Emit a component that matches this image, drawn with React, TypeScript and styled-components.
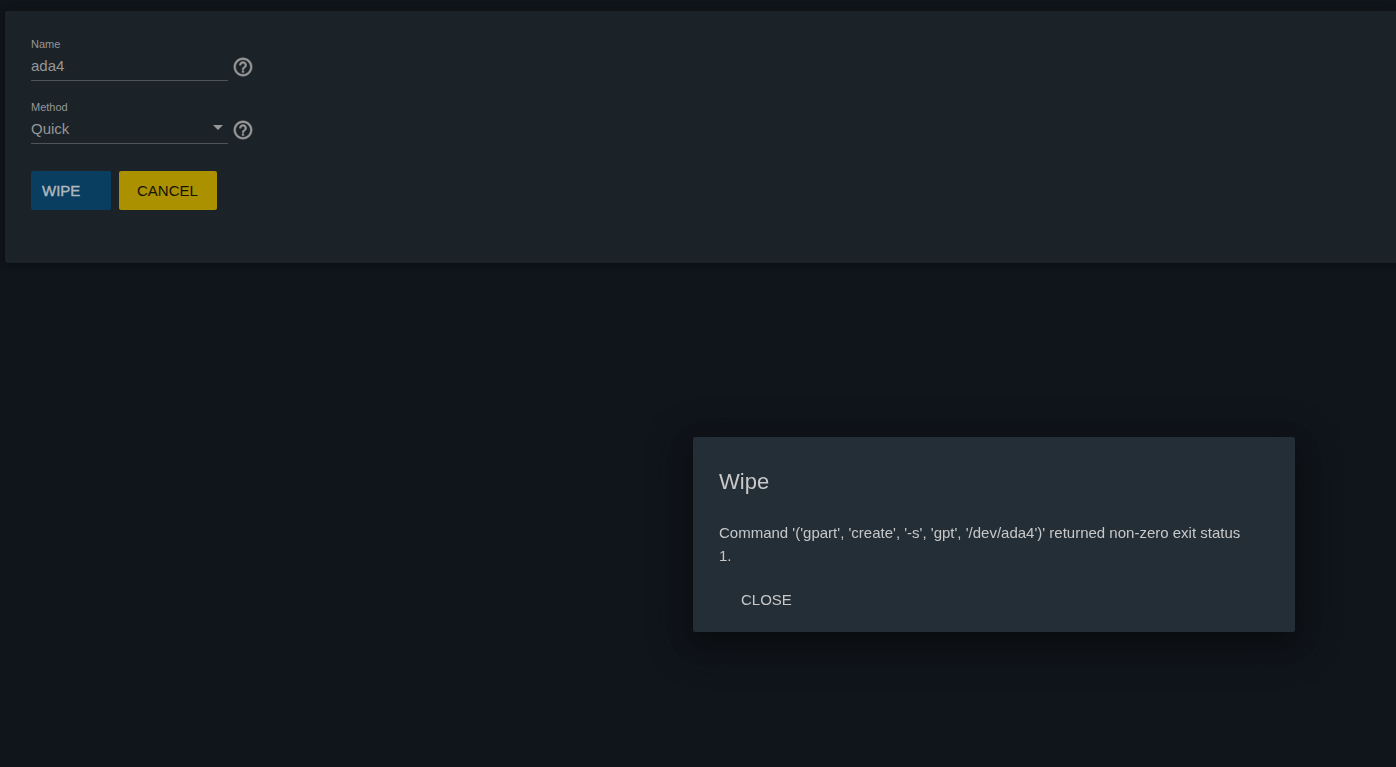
import React, { useState } from "react";
import styled, { createGlobalStyle } from "styled-components";
import { MdHelpOutline } from "react-icons/md";

const GlobalStyle = createGlobalStyle`
  * { box-sizing: border-box; }
  body {
    margin: 0;
    background: #10141b;
    color: #979797;
    font-family: "Liberation Sans", Arial, sans-serif;
    font-size: 15px;
  }
`;

const Page = styled.main`
  min-height: 100vh;
  padding: 11px 0 0 5px;
  overflow: hidden;
`;

const Card = styled.form`
  display: flex;
  flex-direction: column;
  padding: 26px 26px 53px;
  background: #1b2228;
  border-radius: 2px 0 0 2px;
  box-shadow: 0 1px 4px rgba(0, 0, 0, 0.4), 0 0 8px #111617;
`;

const Field = styled.div`
  display: flex;
  align-items: flex-end;
  gap: 4px;
  margin-bottom: 19px;
`;

const Control = styled.div`
  position: relative;
  width: 197px;
  border-bottom: 1px solid #505456;
`;

const Label = styled.label`
  display: block;
  height: 14px;
  font-size: 11px;
  line-height: 14px;
`;

const TextInput = styled.input`
  display: block;
  width: 100%;
  height: 29px;
  padding: 0 0 1px;
  border: 0;
  outline: 0;
  background: transparent;
  color: inherit;
  font: inherit;
`;

const Select = styled.select`
  display: block;
  width: 100%;
  height: 29px;
  padding: 0 0 1px;
  border: 0;
  outline: 0;
  appearance: none;
  background: transparent;
  color: inherit;
  font: inherit;
`;

const Caret = styled.span`
  position: absolute;
  right: 5px;
  bottom: 13px;
  border: 5px solid transparent;
  border-top-color: currentColor;
  border-bottom: 0;
  pointer-events: none;
`;

const HelpButton = styled.button`
  display: flex;
  margin-bottom: 3px;
  padding: 0;
  border: 0;
  background: transparent;
  color: #979797;
  font-size: 22px;

  path:last-child {
    stroke: currentColor;
    stroke-width: 0.5px;
  }
`;

const Actions = styled.div`
  display: flex;
  gap: 8px;
  margin-top: 8px;
`;

const Button = styled.button<{ $tone: "primary" | "accent" | "plain" }>`
  height: 39px;
  min-width: ${({ $tone }) => ($tone === "accent" ? "98px" : "80px")};
  border: 0;
  border-radius: 2px;
  font: inherit;
  text-align: left;
  text-transform: uppercase;
  padding: ${({ $tone }) => ($tone === "primary" ? "0 30px 0 11px" : "0 18px")};
  -webkit-text-stroke: ${({ $tone }) => ($tone === "primary" ? "0.4px" : "0")};
  background: ${({ $tone }) =>
    ({ primary: "#093e61", accent: "#ab9000", plain: "transparent" })[$tone]};
  color: ${({ $tone }) =>
    ({ primary: "#b1b8bc", accent: "#151303", plain: "#c8c8c8" })[$tone]};
`;

const Overlay = styled.div`
  position: fixed;
  inset: 0;
  display: flex;
  align-items: flex-end;
  justify-content: flex-end;
  padding: 0 101px 135px;
`;

const Dialog = styled.section`
  width: 100%;
  max-width: 602px;
  padding: 26px 26px 13px;
  background: #242e36;
  color: #c8c8c8;
  border-radius: 2px;
  box-shadow: 0 11px 15px -7px rgba(0, 0, 0, 0.2),
    0 8px 24px rgba(0, 0, 0, 0.25), 0 9px 38px 3px rgba(17, 20, 20, 0.9);
`;

const Title = styled.h1`
  margin: 0 0 20px;
  font-size: 22px;
  font-weight: 400;
  line-height: 38px;
`;

const Message = styled.p`
  margin: 0 0 13px;
  padding-right: 14px;
  line-height: 23px;
`;

const DialogActions = styled.div`
  display: flex;
  padding-left: 4px;
`;

export default function App() {
  const [name, setName] = useState("ada4");
  const [open, setOpen] = useState(true);

  return (
    <>
      <GlobalStyle />
      <Page>
        <Card onSubmit={(e) => { e.preventDefault(); setOpen(true); }}>
          <Field>
            <Control>
              <Label htmlFor="name">Name</Label>
              <TextInput id="name" value={name} onChange={(e) => setName(e.target.value)} />
            </Control>
            <HelpButton type="button" aria-label="Help for name"><MdHelpOutline /></HelpButton>
          </Field>
          <Field>
            <Control>
              <Label htmlFor="method">Method</Label>
              <Select id="method" defaultValue="quick">
                <option value="quick">Quick</option>
              </Select>
              <Caret />
            </Control>
            <HelpButton type="button" aria-label="Help for method"><MdHelpOutline /></HelpButton>
          </Field>
          <Actions>
            <Button $tone="primary" type="submit">Wipe</Button>
            <Button $tone="accent" type="button">Cancel</Button>
          </Actions>
        </Card>
      </Page>
      {open && (
        <Overlay>
          <Dialog role="dialog" aria-modal="true" aria-labelledby="dialog-title">
            <Title id="dialog-title">Wipe</Title>
            <Message>
              Command '('gpart', 'create', '-s', 'gpt', '/dev/ada4')' returned non-zero exit status 1.
            </Message>
            <DialogActions>
              <Button $tone="plain" type="button" onClick={() => setOpen(false)}>Close</Button>
            </DialogActions>
          </Dialog>
        </Overlay>
      )}
    </>
  );
}
